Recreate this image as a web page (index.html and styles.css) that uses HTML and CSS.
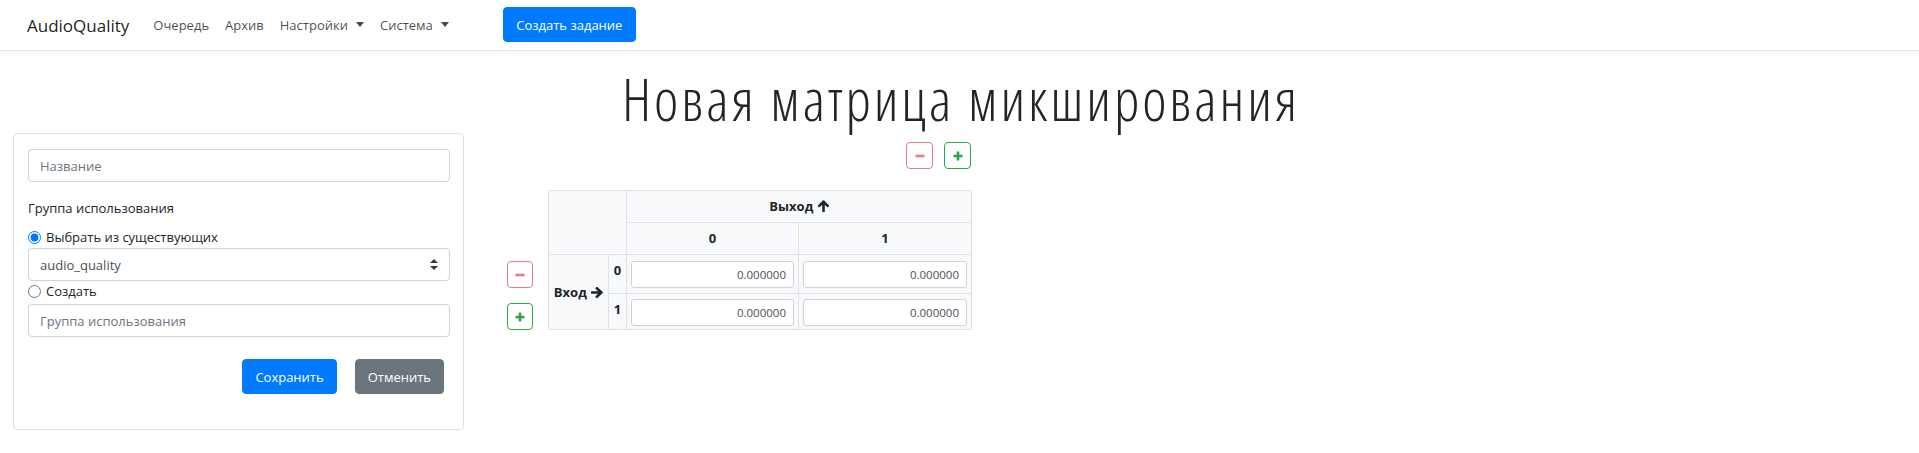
FILE: index.html
```html
<!DOCTYPE html>
<html lang="ru">
<head>
  <meta charset="UTF-8">
  <meta name="viewport" content="width=device-width, initial-scale=1.0">
  <title>Новая матрица микширования</title>
  <link rel="stylesheet" href="styles.css">
</head>
<body>
  <nav class="navbar">
    <a class="brand" href="#">AudioQuality</a>
    <ul class="nav-links">
      <li><a href="#">Очередь</a></li>
      <li><a href="#">Архив</a></li>
      <li><a href="#" class="dropdown">Настройки</a></li>
      <li><a href="#" class="dropdown">Система</a></li>
    </ul>
    <button class="btn btn-primary nav-create">Создать задание</button>
  </nav>

  <main>
    <h1 class="page-title">Новая матрица микширования</h1>

    <div class="content">
      <!-- Matrix settings form -->
      <form class="card">
        <input type="text" class="form-control" placeholder="Название">

        <label class="group-label">Группа использования</label>

        <label class="radio-row radio-first">
          <input type="radio" name="group" checked>
          <span>Выбрать из существующих</span>
        </label>
        <div class="select-wrap">
          <select class="form-control select">
            <option>audio_quality</option>
          </select>
          <svg class="select-arrows" width="8" height="11" viewBox="0 0 8 11">
            <path d="M4 0 L8 4 H0 Z M4 11 L0 7 H8 Z" fill="#343a40"/>
          </svg>
        </div>

        <label class="radio-row">
          <input type="radio" name="group">
          <span>Создать</span>
        </label>
        <input type="text" class="form-control" placeholder="Группа использования">

        <div class="form-actions">
          <button type="button" class="btn btn-primary">Сохранить</button>
          <button type="button" class="btn btn-secondary">Отменить</button>
        </div>
      </form>

      <!-- Mixing matrix -->
      <section class="matrix">
        <div class="col-buttons">
          <button class="btn-icon btn-remove" disabled>
            <svg width="10" height="10" viewBox="0 0 10 10"><path d="M0.5 5 H9.5" stroke="currentColor" stroke-width="2.6"/></svg>
          </button>
          <button class="btn-icon btn-add">
            <svg width="10" height="10" viewBox="0 0 10 10"><path d="M0.5 5 H9.5 M5 0.5 V9.5" stroke="currentColor" stroke-width="2.6"/></svg>
          </button>
        </div>

        <div class="row-buttons">
          <button class="btn-icon btn-remove" disabled>
            <svg width="10" height="10" viewBox="0 0 10 10"><path d="M0.5 5 H9.5" stroke="currentColor" stroke-width="2.6"/></svg>
          </button>
          <button class="btn-icon btn-add">
            <svg width="10" height="10" viewBox="0 0 10 10"><path d="M0.5 5 H9.5 M5 0.5 V9.5" stroke="currentColor" stroke-width="2.6"/></svg>
          </button>
        </div>

        <table class="matrix-table">
          <colgroup>
            <col style="width: 60px">
            <col style="width: 18px">
            <col style="width: 172px">
            <col style="width: 173px">
          </colgroup>
          <tr class="head-row">
            <th colspan="2" rowspan="2"></th>
            <th colspan="2">Выход
              <svg class="arrow" width="11" height="12" viewBox="0 0 11 12"><path d="M5.5 1.5 V11 M1.3 5.8 L5.5 1.6 L9.7 5.8" fill="none" stroke="#212529" stroke-width="2.6" stroke-linecap="round" stroke-linejoin="round"/></svg>
            </th>
          </tr>
          <tr class="head-row">
            <th>0</th>
            <th>1</th>
          </tr>
          <tr class="body-row first">
            <th rowspan="2" class="in-label">Вход
              <svg class="arrow" width="12" height="11" viewBox="0 0 12 11"><path d="M1 5.5 H10.5 M5.8 1.3 L10.4 5.5 L5.8 9.7" fill="none" stroke="#212529" stroke-width="2.6" stroke-linecap="round" stroke-linejoin="round"/></svg>
            </th>
            <th class="idx">0</th>
            <td><input type="text" class="cell-input" value="0.000000"></td>
            <td><input type="text" class="cell-input" value="0.000000"></td>
          </tr>
          <tr class="body-row second">
            <th class="idx">1</th>
            <td><input type="text" class="cell-input" value="0.000000"></td>
            <td><input type="text" class="cell-input" value="0.000000"></td>
          </tr>
        </table>
      </section>
    </div>
  </main>
</body>
</html>
```

FILE: styles.css
```css
* {
  box-sizing: border-box;
}

body {
  margin: 0;
  font-family: 'Open Sans', 'Noto Sans', sans-serif;
  font-size: 13px;
  line-height: 21px;
  color: #212529;
  background: #ffffff;
}

a {
  text-decoration: none;
}

/* ---------- navbar ---------- */

.navbar {
  height: 51px;
  display: flex;
  align-items: center;
  margin: 0;
  padding: 0 0 0 27px;
  border-bottom: 1px solid #e2e2ea;
  box-shadow: 0 2px 5px rgba(0, 0, 0, 0.04);
}

.brand {
  font-size: 17px;
  color: rgba(0, 0, 0, 0.9);
  margin-right: 24px;
}

.nav-links {
  list-style: none;
  display: flex;
  gap: 16px;
  margin: 0;
  padding: 0;
}

.nav-links a {
  color: rgba(0, 0, 0, 0.72);
}

.dropdown::after {
  content: "";
  display: inline-block;
  margin-left: 8px;
  vertical-align: 3px;
  border-top: 5px solid;
  border-left: 4px solid transparent;
  border-right: 4px solid transparent;
}

.nav-create {
  margin-left: 54px;
  width: 133px;
  margin-top: -1px;
}

/* ---------- buttons ---------- */

.btn {
  height: 35px;
  padding: 0 12px;
  border: 1px solid transparent;
  border-radius: 4px;
  font-family: inherit;
  font-size: 13px;
  color: #ffffff;
  cursor: pointer;
}

.btn-primary {
  background: #007bff;
  border-color: #007bff;
}

.btn-secondary {
  background: #6c757d;
  border-color: #6c757d;
}

.btn-icon {
  width: 27px;
  height: 27px;
  padding: 0;
  display: flex;
  align-items: center;
  justify-content: center;
  background: #ffffff;
  border: 1px solid;
  border-radius: 4px;
}

.btn-remove {
  color: #dc3545;
  border-color: #dc3545;
  opacity: 0.65;
}

.btn-add {
  color: #28a745;
  border-color: #28a745;
}

/* ---------- page ---------- */

.page-title {
  margin: 16px 0 2px;
  text-align: center;
  font-size: 58px;
  font-weight: 300;
  font-stretch: 75%;
  letter-spacing: 2.9px;
  text-indent: 2.9px;
  line-height: 64px;
  color: #212529;
}

.content {
  display: flex;
  align-items: flex-start;
  gap: 43px;
  padding-left: 13px;
}

/* ---------- form card ---------- */

.card {
  width: 451px;
  margin: 0;
  padding: 15px 13px 35px 14px;
  border: 1px solid rgba(0, 0, 0, 0.125);
  border-radius: 4px;
}

.form-control {
  display: block;
  width: 100%;
  height: 33px;
  padding: 0 11px;
  border: 1px solid #ced4da;
  border-radius: 4px;
  font-family: inherit;
  font-size: 13px;
  color: #495057;
  background: #ffffff;
}

.form-control::placeholder {
  color: #6c757d;
}

.group-label {
  display: block;
  margin-top: 16px;
}

.radio-row {
  display: flex;
  align-items: center;
  gap: 5px;
  height: 21px;
}

.radio-first {
  margin-top: 8px;
}

.radio-row input {
  width: 13px;
  height: 13px;
  margin: 0;
}

.select-wrap {
  position: relative;
}

.select {
  appearance: none;
}

.select-arrows {
  position: absolute;
  right: 12px;
  top: 11px;
}

.radio-row + .form-control {
  margin-top: 2px;
}

.form-actions {
  display: flex;
  justify-content: flex-end;
  gap: 18px;
  margin-top: 22px;
  padding-right: 6px;
}

/* ---------- matrix ---------- */

.matrix {
  display: grid;
  grid-template-columns: 26px 423px;
  grid-template-rows: 27px auto;
  column-gap: 15px;
  row-gap: 21px;
  margin-top: 9px;
}

.col-buttons {
  grid-column: 2;
  display: flex;
  justify-content: flex-end;
  gap: 11px;
}

.row-buttons {
  grid-column: 1;
  grid-row: 2;
  display: flex;
  flex-direction: column;
  justify-content: flex-end;
  gap: 15px;
}

.row-buttons .btn-icon {
  width: 26px;
}

.matrix-table {
  grid-column: 2;
  grid-row: 2;
  width: 423px;
  table-layout: fixed;
  border-collapse: collapse;
  background: #f8f9fa;
  border: 1px solid #dee2e6;
}

.matrix-table th,
.matrix-table td {
  border: 1px solid #dee2e6;
  padding: 0;
  text-align: center;
  font-weight: 700;
}

.head-row {
  height: 32px;
}

.body-row.first {
  height: 39px;
}

.body-row.second {
  height: 36px;
}

.body-row td {
  padding: 0 4px;
}

.body-row.second td {
  padding: 2px 4px 0;
}

.arrow {
  vertical-align: -1px;
  margin-left: 1px;
}

.in-label {
  white-space: nowrap;
}

.idx {
  vertical-align: top;
  padding-top: 5px !important;
}

.cell-input {
  display: block;
  width: 100%;
  height: 27px;
  padding: 0 7px;
  border: 1px solid #ced4da;
  border-radius: 3px;
  background: #ffffff;
  text-align: right;
  font-family: inherit;
  font-size: 11.5px;
  color: #495057;
}
```
